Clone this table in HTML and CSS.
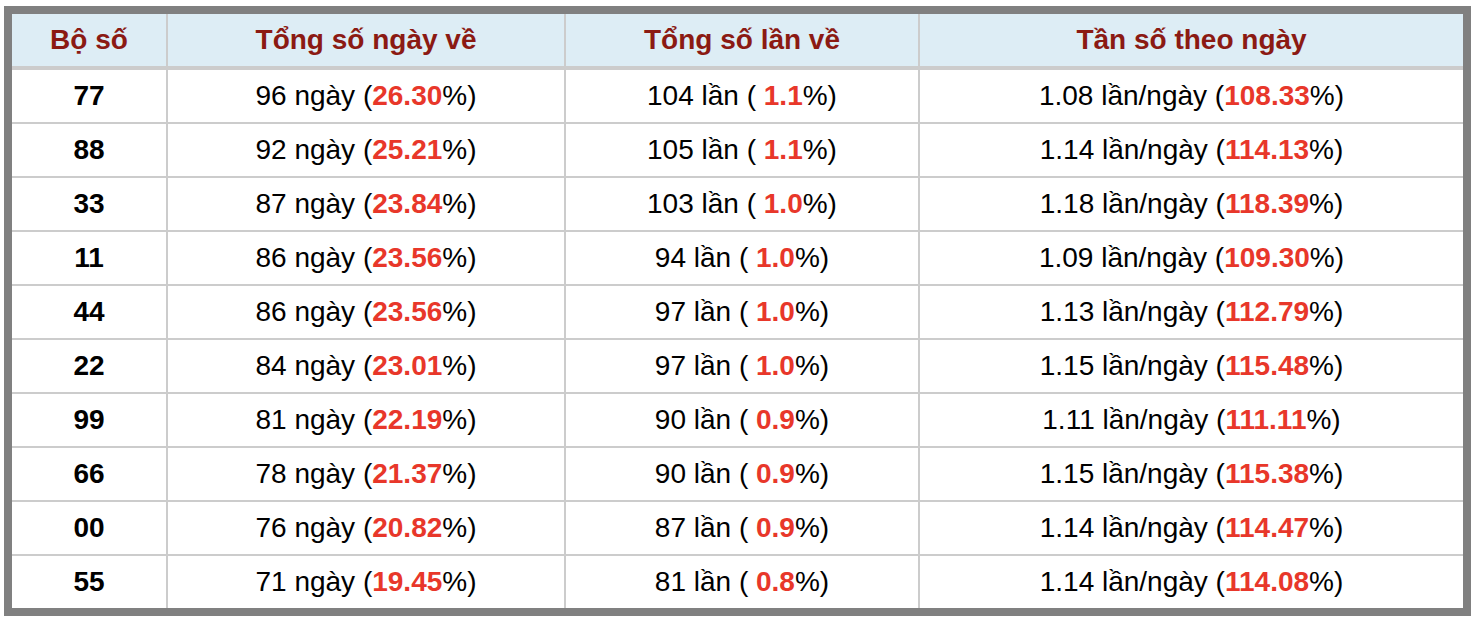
FILE: index.html
```html
<!DOCTYPE html>
<html lang="vi">
<head>
<meta charset="utf-8">
<link rel="stylesheet" href="styles.css">
</head>
<body>
<div class="frame">
<table class="stats">
<thead>
<tr><th class="c1">Bộ số</th><th class="c2">Tổng số ngày về</th><th class="c3">Tổng số lần về</th><th class="c4">Tần số theo ngày</th></tr>
</thead>
<tbody>
<tr><td class="num">77</td><td>96 ngày (<b>26.30</b>%)</td><td>104 lần ( <b>1.1</b>%)</td><td>1.08 lần/ngày (<b>108.33</b>%)</td></tr>
<tr><td class="num">88</td><td>92 ngày (<b>25.21</b>%)</td><td>105 lần ( <b>1.1</b>%)</td><td>1.14 lần/ngày (<b>114.13</b>%)</td></tr>
<tr><td class="num">33</td><td>87 ngày (<b>23.84</b>%)</td><td>103 lần ( <b>1.0</b>%)</td><td>1.18 lần/ngày (<b>118.39</b>%)</td></tr>
<tr><td class="num">11</td><td>86 ngày (<b>23.56</b>%)</td><td>94 lần ( <b>1.0</b>%)</td><td>1.09 lần/ngày (<b>109.30</b>%)</td></tr>
<tr><td class="num">44</td><td>86 ngày (<b>23.56</b>%)</td><td>97 lần ( <b>1.0</b>%)</td><td>1.13 lần/ngày (<b>112.79</b>%)</td></tr>
<tr><td class="num">22</td><td>84 ngày (<b>23.01</b>%)</td><td>97 lần ( <b>1.0</b>%)</td><td>1.15 lần/ngày (<b>115.48</b>%)</td></tr>
<tr><td class="num">99</td><td>81 ngày (<b>22.19</b>%)</td><td>90 lần ( <b>0.9</b>%)</td><td>1.11 lần/ngày (<b>111.11</b>%)</td></tr>
<tr><td class="num">66</td><td>78 ngày (<b>21.37</b>%)</td><td>90 lần ( <b>0.9</b>%)</td><td>1.15 lần/ngày (<b>115.38</b>%)</td></tr>
<tr><td class="num">00</td><td>76 ngày (<b>20.82</b>%)</td><td>87 lần ( <b>0.9</b>%)</td><td>1.14 lần/ngày (<b>114.47</b>%)</td></tr>
<tr><td class="num">55</td><td>71 ngày (<b>19.45</b>%)</td><td>81 lần ( <b>0.8</b>%)</td><td>1.14 lần/ngày (<b>114.08</b>%)</td></tr>
</tbody>
</table>
</div>
</body>
</html>
```

FILE: styles.css
```css
html, body {
  margin: 0;
  padding: 0;
  background: #ffffff;
}
body {
  padding: 6px 0 0 4px;
  font-family: "Liberation Sans", Arial, Helvetica, sans-serif;
}
.frame {
  width: 1451px;
  border: 8px solid #808080;
  background: #ffffff;
}
.stats {
  width: 1451px;
  border-collapse: separate;
  border-spacing: 0;
  table-layout: fixed;
  font-size: 28px;
  color: #000000;
}
.stats th, .stats td {
  padding: 0;
  text-align: center;
  vertical-align: middle;
  border-right: 2px solid #cccccc;
  border-bottom: 2px solid #cccccc;
  white-space: nowrap;
}
.stats th:last-child, .stats td:last-child {
  border-right: none;
}
.stats tbody tr:last-child td {
  border-bottom: none;
}
.stats th {
  height: 52px;
  background: #ddedf5;
  color: #8b1a13;
  font-weight: bold;
  border-bottom: 4px solid #cccccc;
}
.stats td {
  height: 52px;
}
.c1 { width: 154px; }
.c2 { width: 396px; }
.c3 { width: 352px; }
.c4 { width: 543px; }
.stats td.num {
  font-weight: bold;
}
.stats b {
  color: #e8372a;
  font-weight: bold;
}
```
